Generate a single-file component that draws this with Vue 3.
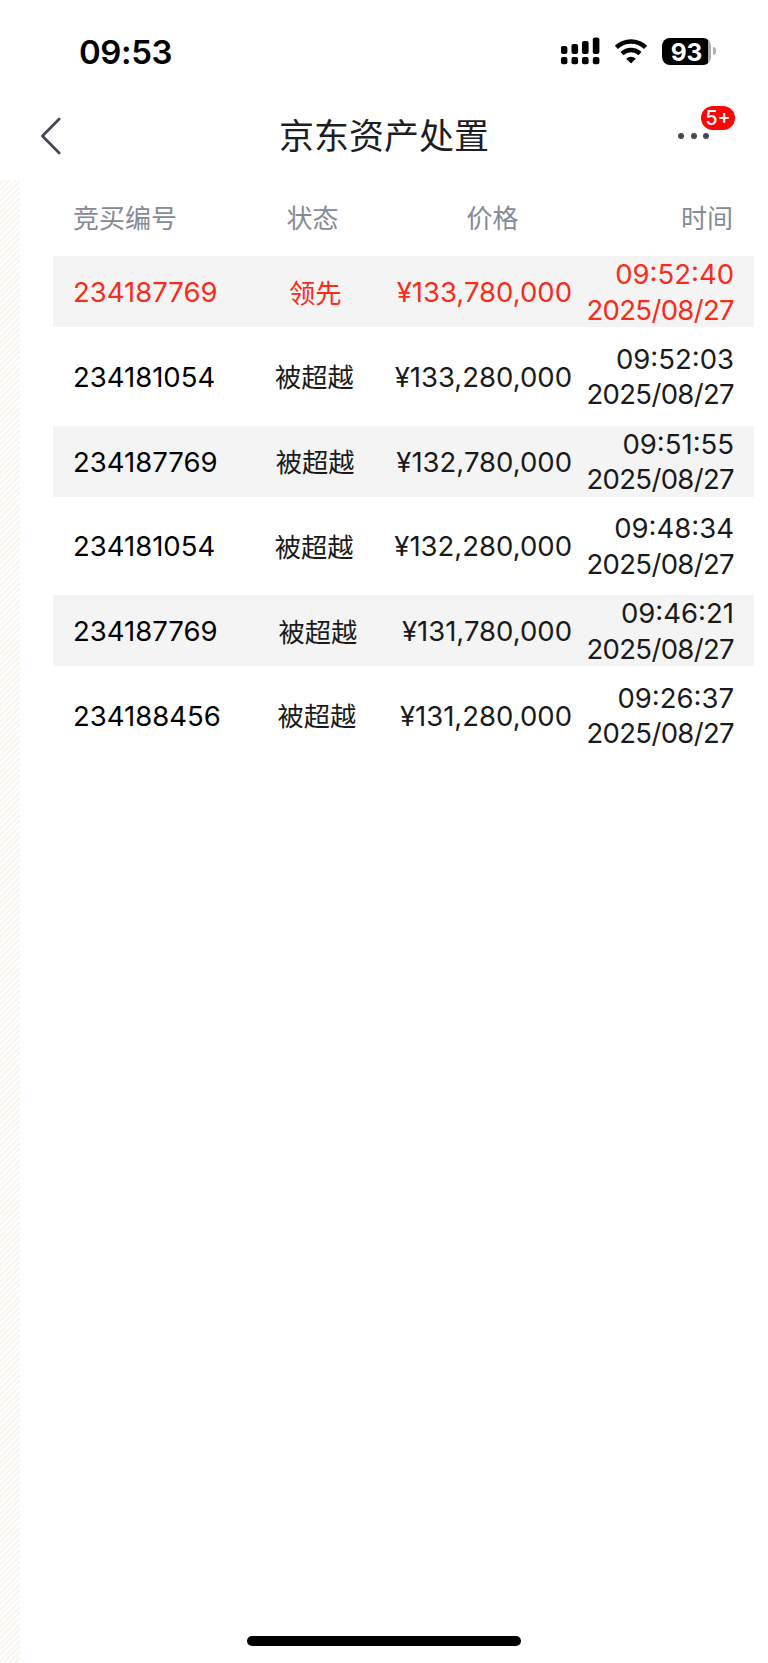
<script setup>
import { ref } from 'vue';

const title = ref('京东资产处置')
const columns = ['竞买编号', '状态', '价格', '时间']

const bids = ref([
    { id: '234187769', status: '领先', price: '¥133,780,000', time: '09:52:40', date: '2025/08/27', leading: true },
    { id: '234181054', status: '被超越', price: '¥133,280,000', time: '09:52:03', date: '2025/08/27' },
    { id: '234187769', status: '被超越', price: '¥132,780,000', time: '09:51:55', date: '2025/08/27' },
    { id: '234181054', status: '被超越', price: '¥132,280,000', time: '09:48:34', date: '2025/08/27' },
    { id: '234187769', status: '被超越', price: '¥131,780,000', time: '09:46:21', date: '2025/08/27' },
    { id: '234188456', status: '被超越', price: '¥131,280,000', time: '09:26:37', date: '2025/08/27' },
])
</script>

<template>
    <div class="screen">
        <div class="status-bar">
            <span class="clock">09:53</span>
            <div class="indicators">
                <svg class="signal" width="39" height="28" viewBox="0 0 39 28">
                    <rect x="0" y="9" width="6.4" height="8" rx="2" />
                    <rect x="10.5" y="7" width="6.6" height="10" rx="2" />
                    <rect x="21" y="4" width="6.6" height="13" rx="2" />
                    <rect x="31.8" y="0.5" width="6.6" height="16.5" rx="2" />
                    <rect x="0" y="20" width="6.4" height="7.2" rx="2" />
                    <rect x="10.5" y="20" width="6.6" height="7.2" rx="2" />
                    <rect x="21" y="20" width="6.6" height="7.2" rx="2" />
                    <rect x="31.8" y="20" width="6.6" height="7.2" rx="2" />
                </svg>
                <svg class="wifi" width="34" height="25" viewBox="0 0 34 25">
                    <path d="M2.4 8.4a21 21 0 0 1 29.2 0" fill="none" stroke="#000" stroke-width="4.6" />
                    <path d="M8 14.6a13 13 0 0 1 18 0" fill="none" stroke="#000" stroke-width="4.4" />
                    <path d="M17 24.6l-4.8-4.9a7 7 0 0 1 9.6 0z" />
                </svg>
                <div class="battery">
                    <div class="battery-body">93</div>
                    <div class="battery-cap"></div>
                </div>
            </div>
        </div>

        <header class="nav">
            <svg class="back" width="22" height="38" viewBox="0 0 22 38">
                <path d="M19.2 2L2.4 19l16.8 17" fill="none" stroke="#454854" stroke-width="2.8"
                    stroke-linecap="round" stroke-linejoin="round" />
            </svg>
            <h1>{{ title }}</h1>
            <div class="more">
                <i></i><i></i><i></i>
                <span class="badge">5+</span>
            </div>
        </header>

        <main class="content">
            <div class="stripe"></div>
            <div class="records">
                <div class="head">
                    <span v-for="name in columns" :key="name">{{ name }}</span>
                </div>
                <div v-for="(bid, i) in bids" :key="i" :class="{ row: true, leading: bid.leading }">
                    <span class="id">{{ bid.id }}</span>
                    <span class="status">{{ bid.status }}</span>
                    <span class="price">{{ bid.price }}</span>
                    <div class="when">
                        <span>{{ bid.time }}</span>
                        <span class="date">{{ bid.date }}</span>
                    </div>
                </div>
            </div>
        </main>

        <div class="home-indicator"></div>
    </div>
</template>

<style>
body {
    margin: 0;
    background: #fff;
}
</style>

<style scoped>
.screen {
    width: 768px;
    height: 1663px;
    background: #fff;
    position: relative;
    overflow: hidden;
    display: flex;
    flex-direction: column;
    font-family: Inter, "Noto Sans CJK SC", sans-serif;
}

.status-bar {
    box-sizing: border-box;
    height: 102px;
    padding: 0 52px 0 79px;
    display: flex;
    justify-content: space-between;
    align-items: center;
}

.clock {
    padding-top: 2px;
    font-size: 33px;
    font-weight: 600;
    line-height: 40px;
    letter-spacing: -0.4px;
}

.indicators {
    display: flex;
    align-items: center;
}

.wifi {
    margin-left: 14px;
}

.battery {
    margin-left: 14px;
    display: flex;
    align-items: center;
}

.battery-body {
    width: 49px;
    height: 27px;
    border-radius: 8px;
    background: linear-gradient(90deg, #000 46px, #aaa 46px);
    color: #fff;
    font-size: 24.5px;
    font-weight: 700;
    line-height: 28px;
    text-align: center;
}

.battery-cap {
    width: 3px;
    height: 8px;
    margin-left: 2px;
    border-radius: 0 4px 4px 0;
    background: #b0b0b0;
}

.nav {
    box-sizing: border-box;
    height: 78px;
    padding: 0 59px 10px 40px;
    display: grid;
    grid-template-columns: 50px 1fr 31px;
    align-items: center;
}

h1 {
    margin: 0;
    font-size: 35px;
    font-weight: 400;
    line-height: 50px;
    text-align: center;
    color: #1d1e24;
}

.more {
    position: relative;
    display: flex;
    gap: 6.5px;
}

.more i {
    width: 6px;
    height: 6px;
    border-radius: 50%;
    background: #454854;
}

.badge {
    position: absolute;
    left: 23px;
    top: -27px;
    width: 34px;
    height: 24px;
    border-radius: 12px;
    background: #ff0505;
    color: #fff;
    font-size: 20px;
    font-weight: 500;
    line-height: 25px;
    text-align: center;
}

.content {
    flex: 1;
    display: flex;
}

.stripe {
    width: 20px;
    background: repeating-linear-gradient(135deg, #fffefd 0 2px, #f9f6f2 2px 4px);
}

.records {
    width: 701px;
    margin-left: 33px;
}

.head {
    box-sizing: border-box;
    height: 76.3px;
    padding: 0 21px 3px 20px;
    display: grid;
    grid-template-columns: 158px 163px 197px 1fr;
    align-items: center;
    text-align: center;
    font-size: 26px;
    color: #868a96;
}

.head span:first-child {
    text-align: left;
}

.head span:last-child {
    text-align: right;
}

.row {
    height: 71px;
    margin-bottom: 13.7px;
    padding: 0 20px;
    display: grid;
    grid-template-columns: 161px 1fr auto 162px;
    align-items: center;
    font-size: 27.5px;
    color: #1a1a1a;
}

.row:nth-child(even) {
    background: #f4f4f4;
}

.id {
    color: #000;
}

.status {
    padding-bottom: 2px;
    font-size: 26.3px;
    text-align: center;
}

.when {
    padding-top: 1px;
    display: flex;
    flex-direction: column;
    text-align: right;
    line-height: 35.5px;
}

.date {
    letter-spacing: -0.65px;
}

.row.leading,
.leading .id {
    color: #fa2c19;
}

.home-indicator {
    position: absolute;
    left: 247px;
    bottom: 17px;
    width: 274px;
    height: 10px;
    border-radius: 5px;
    background: #000;
}
</style>
